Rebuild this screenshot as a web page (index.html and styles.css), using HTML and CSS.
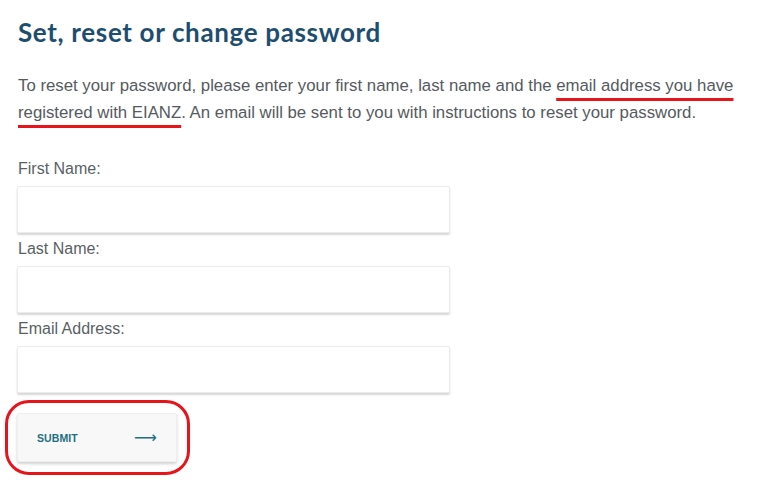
FILE: index.html
```html
<!DOCTYPE html>
<html>
<head>
<meta charset="utf-8">
<link rel="stylesheet" href="styles.css">
</head>
<body>
<main class="page">
  <h1 class="title">Set, reset or change password</h1>
  <p class="intro">To reset your password, please enter your first name, last name and the <span class="mark">email address you have</span> <span class="mark">registered with EIANZ</span>. An email will be sent to you with instructions to reset your password.</p>
  <form class="form">
    <label class="label" for="fn">First Name:</label>
    <input class="field" id="fn" type="text">
    <label class="label" for="ln">Last Name:</label>
    <input class="field" id="ln" type="text">
    <label class="label" for="em">Email Address:</label>
    <input class="field" id="em" type="text">
    <div class="submit-wrap">
      <button class="submit" type="button"><span class="submit-text">SUBMIT</span><span class="arrow">&#10230;</span></button>
      <span class="ring"></span>
    </div>
  </form>
</main>
</body>
</html>
```

FILE: styles.css
```css
html, body {
  margin: 0;
  padding: 0;
  background: #ffffff;
  min-height: 100vh;
}
.page {
  padding: 16px 0 30px 18px;
  width: 736px;
}
.title {
  margin: 0;
  font-family: "Lato", "DejaVu Sans", sans-serif;
  font-weight: 700;
  font-size: 26px;
  line-height: 32px;
  color: #1d4e6f;
  letter-spacing: 0.65px;
}
.intro {
  margin: 24px 0 0 0;
  font-family: "Liberation Sans", Arial, sans-serif;
  font-size: 16.8px;
  line-height: 27px;
  color: #555a60;
}
.mark {
  text-decoration: underline;
  text-decoration-color: #e8141c;
  text-decoration-thickness: 3px;
  text-underline-offset: 7px;
}
.form {
  display: flex;
  flex-direction: column;
  align-items: flex-start;
  margin-top: 33px;
}
.label {
  font-family: "Liberation Sans", Arial, sans-serif;
  font-size: 16px;
  line-height: 20px;
  color: #5a5f66;
  margin-bottom: 7px;
}
.field {
  box-sizing: border-box;
  width: 433px;
  height: 47px;
  margin: 0 0 6px -1px;
  border: 1px solid #ececec;
  border-radius: 2px;
  background: #fff;
  box-shadow: 0 2px 2px rgba(0, 0, 0, 0.16);
  outline: none;
}
.submit-wrap {
  position: relative;
  margin: 14px 0 0 -1px;
}
.submit {
  box-sizing: border-box;
  width: 160px;
  height: 49px;
  display: flex;
  align-items: center;
  justify-content: space-between;
  padding: 0 19px 0 19px;
  background: #f8f8f8;
  border: 1px solid #efefef;
  border-radius: 2px;
  box-shadow: 0 2px 3px rgba(0, 0, 0, 0.18);
  cursor: pointer;
}
.submit-text {
  font-family: "Liberation Sans Narrow", "Liberation Sans", Arial, sans-serif;
  font-weight: 700;
  font-size: 10.5px;
  letter-spacing: 0.1px;
  color: #1f6f80;
}
.arrow {
  font-family: "DejaVu Sans", sans-serif;
  font-size: 16px;
  line-height: 16px;
  color: #1f6f80;
}
.ring {
  position: absolute;
  left: -12px;
  top: -13px;
  width: 179px;
  height: 69px;
  border: 3px solid #e8141c;
  border-radius: 24px;
  pointer-events: none;
}
```
